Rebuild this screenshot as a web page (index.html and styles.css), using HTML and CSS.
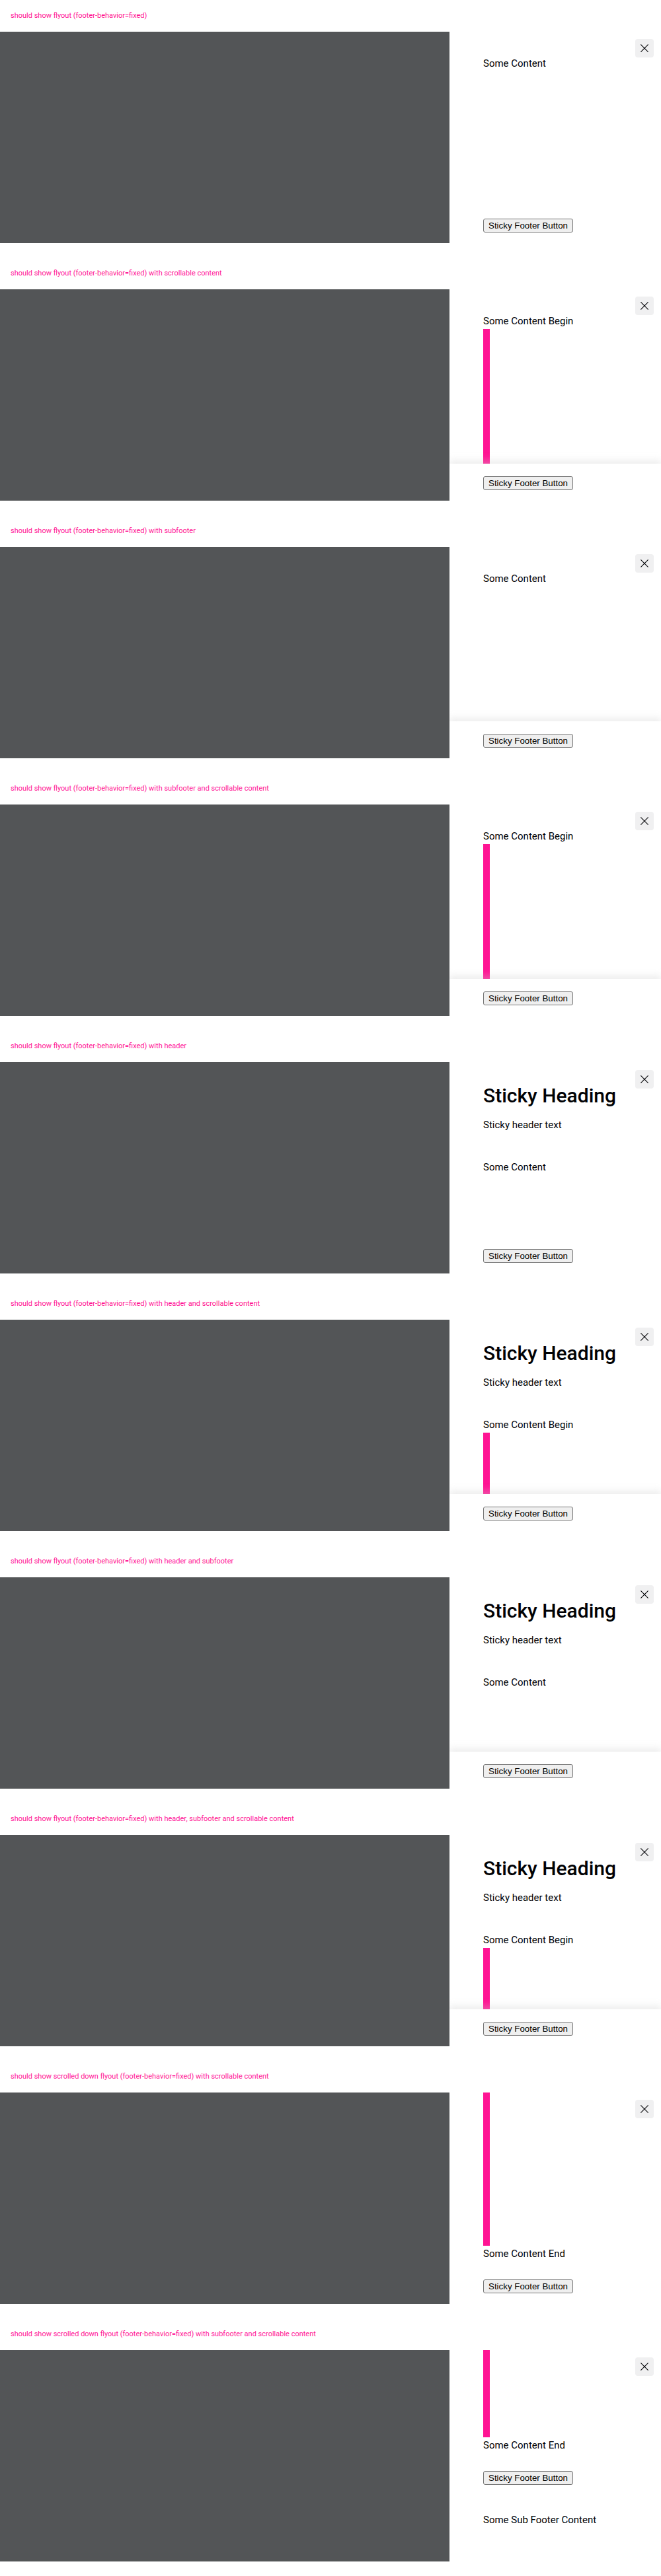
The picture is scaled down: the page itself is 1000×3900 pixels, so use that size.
FILE: index.html
```
<!DOCTYPE html>
<html lang="en">
<head>
<meta charset="utf-8">
<meta name="viewport" content="width=device-width, initial-scale=1">
<title>Flyout – footer-behavior</title>
<link rel="stylesheet" href="styles.css">
</head>
<body>
<svg class="sprite" aria-hidden="true">
  <symbol id="close" viewBox="0 0 12 12"><path d="M0.4 0.4 11.6 11.6M11.6 0.4 0.4 11.6" fill="none" stroke="#010205" stroke-width="1.1"/></symbol>
</svg>
<main>
<section class="playground">
  <p class="label">should show flyout (footer-behavior=fixed)</p>
  <div class="stage">
    <div class="flyout">
      <button class="close" type="button" aria-label="Dismiss flyout"><svg class="icon"><use href="#close"/></svg></button>
      <div class="body"><div class="content"><p>Some Content</p></div></div>
      <div class="footer"><button class="action" type="button">Sticky Footer Button</button></div>
    </div>
  </div>
</section>
<section class="playground">
  <p class="label">should show flyout (footer-behavior=fixed) with scrollable content</p>
  <div class="stage">
    <div class="flyout">
      <button class="close" type="button" aria-label="Dismiss flyout"><svg class="icon"><use href="#close"/></svg></button>
      <div class="body"><div class="content"><p>Some Content Begin</p><div class="bar"></div></div></div>
      <div class="footer footer-shadow"><button class="action" type="button">Sticky Footer Button</button></div>
    </div>
  </div>
</section>
<section class="playground">
  <p class="label">should show flyout (footer-behavior=fixed) with subfooter</p>
  <div class="stage">
    <div class="flyout">
      <button class="close" type="button" aria-label="Dismiss flyout"><svg class="icon"><use href="#close"/></svg></button>
      <div class="body"><div class="content"><p>Some Content</p></div></div>
      <div class="footer footer-shadow"><button class="action" type="button">Sticky Footer Button</button></div>
    </div>
  </div>
</section>
<section class="playground">
  <p class="label">should show flyout (footer-behavior=fixed) with subfooter and scrollable content</p>
  <div class="stage">
    <div class="flyout">
      <button class="close" type="button" aria-label="Dismiss flyout"><svg class="icon"><use href="#close"/></svg></button>
      <div class="body"><div class="content"><p>Some Content Begin</p><div class="bar"></div></div></div>
      <div class="footer footer-shadow"><button class="action" type="button">Sticky Footer Button</button></div>
    </div>
  </div>
</section>
<section class="playground">
  <p class="label">should show flyout (footer-behavior=fixed) with header</p>
  <div class="stage">
    <div class="flyout">
      <button class="close" type="button" aria-label="Dismiss flyout"><svg class="icon"><use href="#close"/></svg></button>
      <div class="body">
        <header class="header"><h2>Sticky Heading</h2><p>Sticky header text</p></header>
        <div class="content"><p>Some Content</p></div>
      </div>
      <div class="footer"><button class="action" type="button">Sticky Footer Button</button></div>
    </div>
  </div>
</section>
<section class="playground">
  <p class="label">should show flyout (footer-behavior=fixed) with header and scrollable content</p>
  <div class="stage">
    <div class="flyout">
      <button class="close" type="button" aria-label="Dismiss flyout"><svg class="icon"><use href="#close"/></svg></button>
      <div class="body">
        <header class="header"><h2>Sticky Heading</h2><p>Sticky header text</p></header>
        <div class="content"><p>Some Content Begin</p><div class="bar"></div></div>
      </div>
      <div class="footer footer-shadow"><button class="action" type="button">Sticky Footer Button</button></div>
    </div>
  </div>
</section>
<section class="playground">
  <p class="label">should show flyout (footer-behavior=fixed) with header and subfooter</p>
  <div class="stage">
    <div class="flyout">
      <button class="close" type="button" aria-label="Dismiss flyout"><svg class="icon"><use href="#close"/></svg></button>
      <div class="body">
        <header class="header"><h2>Sticky Heading</h2><p>Sticky header text</p></header>
        <div class="content"><p>Some Content</p></div>
      </div>
      <div class="footer footer-shadow"><button class="action" type="button">Sticky Footer Button</button></div>
    </div>
  </div>
</section>
<section class="playground">
  <p class="label">should show flyout (footer-behavior=fixed) with header, subfooter and scrollable content</p>
  <div class="stage">
    <div class="flyout">
      <button class="close" type="button" aria-label="Dismiss flyout"><svg class="icon"><use href="#close"/></svg></button>
      <div class="body">
        <header class="header"><h2>Sticky Heading</h2><p>Sticky header text</p></header>
        <div class="content"><p>Some Content Begin</p><div class="bar"></div></div>
      </div>
      <div class="footer footer-shadow"><button class="action" type="button">Sticky Footer Button</button></div>
    </div>
  </div>
</section>
<section class="playground">
  <p class="label">should show scrolled down flyout (footer-behavior=fixed) with scrollable content</p>
  <div class="stage">
    <div class="flyout">
      <button class="close" type="button" aria-label="Dismiss flyout"><svg class="icon"><use href="#close"/></svg></button>
      <div class="body scrolled"><div class="content"><div class="bar"></div><p>Some Content End</p></div></div>
      <div class="footer"><button class="action" type="button">Sticky Footer Button</button></div>
    </div>
  </div>
</section>
<section class="playground">
  <p class="label">should show scrolled down flyout (footer-behavior=fixed) with subfooter and scrollable content</p>
  <div class="stage">
    <div class="flyout">
      <button class="close" type="button" aria-label="Dismiss flyout"><svg class="icon"><use href="#close"/></svg></button>
      <div class="body scrolled"><div class="content"><div class="bar"></div><p>Some Content End</p></div></div>
      <div class="footer"><button class="action" type="button">Sticky Footer Button</button></div>
      <div class="subfooter"><p>Some Sub Footer Content</p></div>
    </div>
  </div>
</section>
</main>
</body>
</html>
```
FILE: styles.css
```
* {
  box-sizing: border-box;
}

body,
p,
h2 {
  margin: 0;
}

body {
  background: #fff;
  color: #010205;
  font: 400 15px/24px Roboto, "Liberation Sans", sans-serif;
}

.sprite {
  display: none;
}

.playground {
  padding-bottom: 22px;
}

.label {
  padding: 12px 16px;
  color: #ff1493;
  font-size: 11px;
}

.stage {
  display: flex;
  justify-content: flex-end;
  height: 320px;
  background: #535557;
}

.flyout {
  position: relative;
  display: flex;
  flex-direction: column;
  width: 32%;
  min-width: 320px;
  overflow: hidden;
  background: #fff;
}

.close {
  position: absolute;
  z-index: 1;
  top: 11px;
  right: 11px;
  display: flex;
  align-items: center;
  justify-content: center;
  width: 28px;
  height: 28px;
  padding: 0;
  border: 0;
  border-radius: 4px;
  background: #f0f0f1;
}

.flyout:has(.header) .close {
  top: 12px;
}

.icon {
  width: 12px;
  height: 12px;
}

.body {
  display: flex;
  flex: 1;
  flex-direction: column;
  min-height: 0;
  padding: 36px 51px 0;
}

.scrolled {
  justify-content: flex-end;
  padding: 0 51px 8px;
}

.header {
  padding-bottom: 40px;
}

.header h2 {
  margin-bottom: 18px;
  font-size: 30px;
  font-weight: 500;
  line-height: 29px;
}

.bar {
  width: 10px;
  height: 400px;
  background: #ff1493;
}

.footer {
  position: relative;
  flex: none;
  padding: 19px 51px 16px;
  background: #fff;
}

.footer-shadow {
  box-shadow: 0 -5px 10px rgba(204, 204, 204, 0.35);
}

.action {
  display: block;
  height: 21px;
  padding: 1px 7px;
  border: 1px solid #767676;
  border-radius: 3px;
  background: #efefef;
  color: #000;
  font-family: "Liberation Sans", Arial, sans-serif;
}

.subfooter {
  padding: 25px 51px 51px;
}
```
